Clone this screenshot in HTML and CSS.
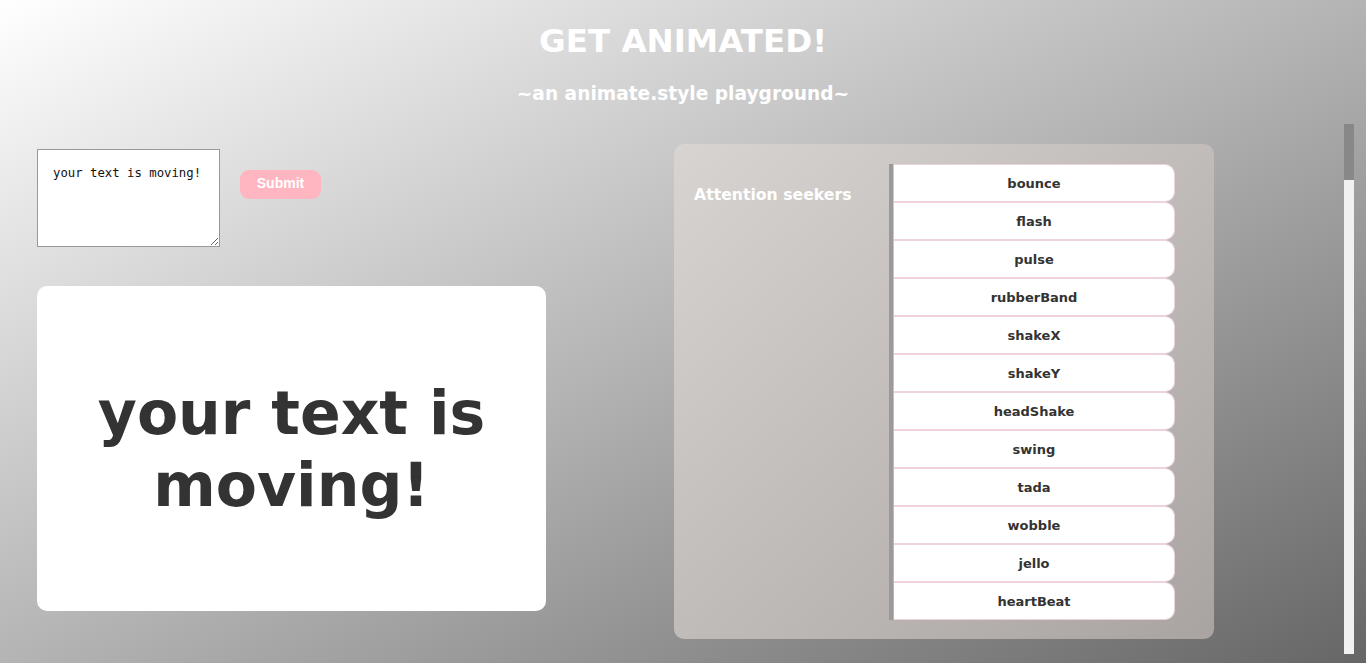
FILE: index.html
```html
<!DOCTYPE html>
<html>
<head>
<meta charset="utf-8">
<title>Get Animated</title>
<link rel="stylesheet" href="styles.css">
</head>
<body>
<header class="header">
  <h1 class="title">GET ANIMATED!</h1>
  <h2 class="subtitle">~an animate.style playground~</h2>
</header>
<main class="main">
  <section class="left">
    <form class="input-row">
      <textarea class="text-input">your text is moving!</textarea>
      <button type="button" class="submit">Submit</button>
    </form>
    <div class="stage">
      <p class="stage-text">your text is moving!</p>
    </div>
  </section>
  <section class="right">
    <div class="right-content">
      <div class="panel">
        <h3 class="group-title">Attention seekers</h3>
        <ul class="anim-list">
          <li class="anim-item">bounce</li>
          <li class="anim-item">flash</li>
          <li class="anim-item">pulse</li>
          <li class="anim-item">rubberBand</li>
          <li class="anim-item">shakeX</li>
          <li class="anim-item">shakeY</li>
          <li class="anim-item">headShake</li>
          <li class="anim-item">swing</li>
          <li class="anim-item">tada</li>
          <li class="anim-item">wobble</li>
          <li class="anim-item">jello</li>
          <li class="anim-item">heartBeat</li>
        </ul>
      </div>
    </div>
    <div class="scrollbar"><div class="scroll-thumb"></div></div>
  </section>
</main>
</body>
</html>
```

FILE: styles.css
```css
html, body {
  margin: 0;
  padding: 0;
  height: 663px;
  overflow: hidden;
}
body {
  font-family: "DejaVu Sans", Verdana, sans-serif;
  background: linear-gradient(to bottom right, #ffffff 0%, #b4b4b4 50%, #666666 100%);
  color: #333;
}
.header {
  text-align: center;
  color: #fff;
  padding-top: 22px;
  height: 124px;
  box-sizing: border-box;
}
.title {
  margin: 0;
  font-size: 32.5px;
  line-height: 38px;
  font-weight: bold;
}
.subtitle {
  margin: 22px 0 0;
  font-size: 18.6px;
  line-height: 24px;
  font-weight: bold;
}
.main {
  display: flex;
  padding-left: 37px;
}
.left {
  width: 509px;
  padding-top: 25px;
}
.input-row {
  display: flex;
  align-items: flex-start;
  gap: 20px;
  margin: 0;
}
.text-input {
  width: 183px;
  height: 98px;
  box-sizing: border-box;
  border: 1px solid #999;
  padding: 16px 15px;
  font-family: "DejaVu Sans Mono", monospace;
  font-size: 12.3px;
  color: #111;
  background: #fff;
  resize: both;
  margin: 0;
}
.submit {
  margin-top: 21px;
  width: 81px;
  height: 29px;
  border: none;
  border-radius: 9px;
  background: #ffb6c1;
  color: #fff;
  font-family: "Liberation Sans", Arial, sans-serif;
  font-weight: bold;
  font-size: 14px;
  padding: 0 0 3px;
}
.stage {
  margin-top: 39px;
  width: 509px;
  height: 325px;
  background: #fff;
  border-radius: 10px;
  display: flex;
  align-items: center;
  justify-content: center;
}
.stage-text {
  margin: 0;
  width: 440px;
  text-align: center;
  font-size: 60px;
  line-height: 72px;
  font-weight: bold;
  color: #333;
}
.right {
  margin-left: auto;
  margin-right: 12px;
  height: 530px;
  display: flex;
}
.right-content {
  width: 670px;
  padding-top: 20px;
}
.scrollbar {
  width: 10px;
  height: 530px;
  background: #f1f1f1;
}
.scroll-thumb {
  height: 56px;
  background: #888;
}
.panel {
  width: 540px;
  height: 495px;
  border-radius: 10px;
  background: linear-gradient(to bottom right, #d8d4d1, #a9a4a1);
  display: flex;
  align-items: flex-start;
  box-sizing: border-box;
  padding: 20px 0 0 20px;
}
.group-title {
  margin: 21px 0 0;
  width: 195px;
  color: #fff;
  font-size: 15.7px;
  line-height: 20px;
  font-weight: bold;
}
.anim-list {
  list-style: none;
  margin: 0;
  padding: 0;
  border-left: 4px solid #9c9a99;
  width: 282px;
}
.anim-item {
  height: 38px;
  box-sizing: border-box;
  background: #fff;
  border: 1px solid #eed3de;
  border-left: none;
  border-radius: 0 10px 10px 0;
  margin-left: 1px;
  display: flex;
  align-items: center;
  justify-content: center;
  font-size: 13px;
  font-weight: bold;
  color: #333;
}
```
